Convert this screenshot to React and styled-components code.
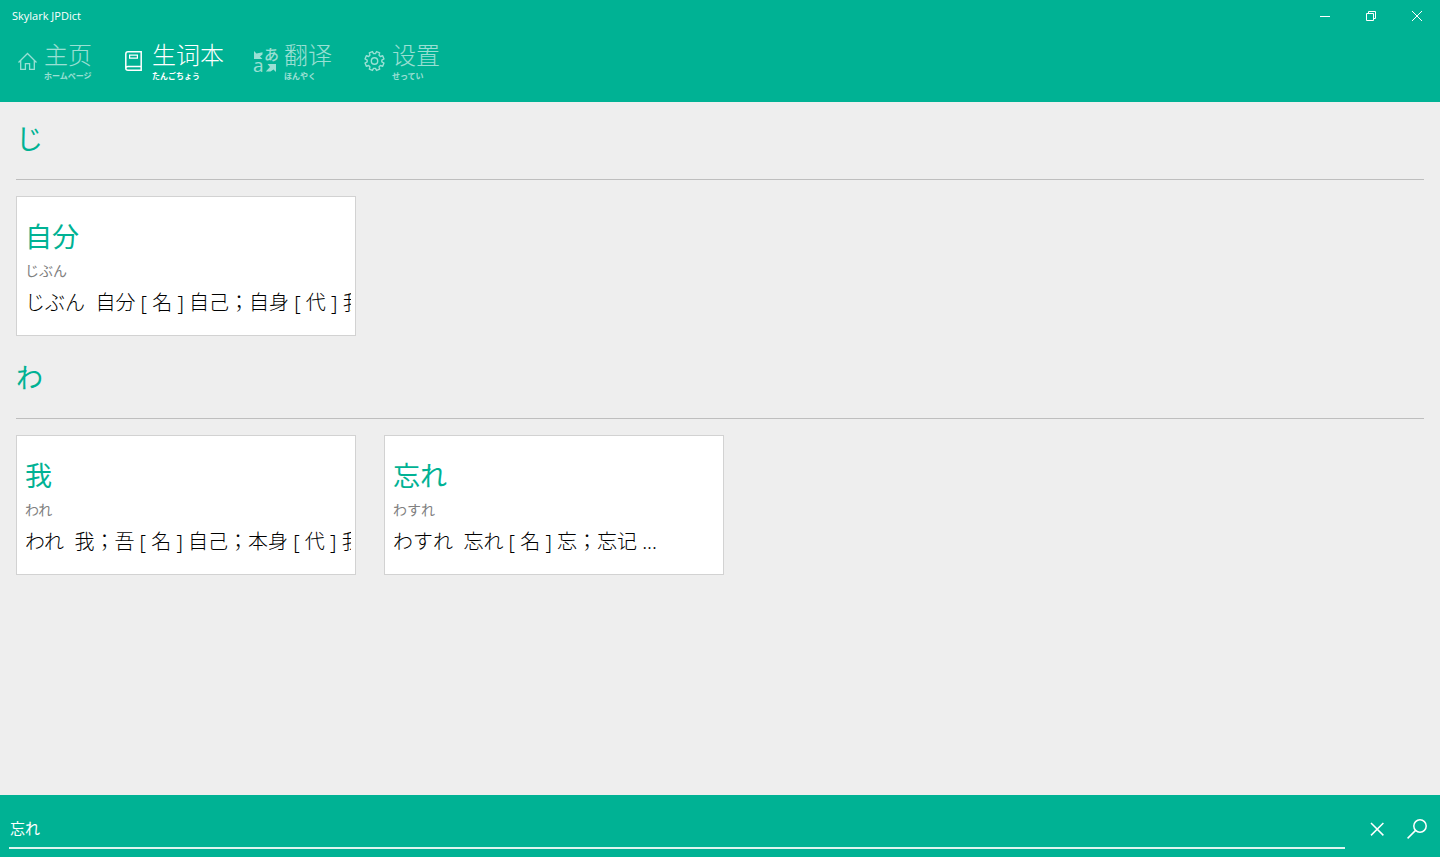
import React, { useState } from "react";
import styled, { createGlobalStyle } from "styled-components";

const teal = "#00b294";
const jp = '"Noto Sans", "Noto Sans CJK JP", sans-serif';
const sc = '"Noto Sans", "Noto Sans CJK SC", sans-serif';

const GlobalStyle = createGlobalStyle`
  *, *::before, *::after { box-sizing: border-box; }
  body { margin: 0; background: #eeeeee; font-family: ${jp}; color: #000; }
  button, input { font: inherit; color: inherit; }
`;

const Page = styled.div`
  display: flex;
  flex-direction: column;
  min-height: 100vh;
`;

const Header = styled.header`
  background: ${teal};
  color: #fff;
  padding-bottom: 19px;
`;

const TitleBar = styled.div`
  display: flex;
  align-items: center;
  justify-content: space-between;
  height: 32px;
  padding-left: 12px;
`;

const AppTitle = styled.h1`
  margin: 0;
  font-family: "Open Sans", sans-serif;
  font-size: 11px;
  font-weight: 500;
  line-height: 16px;
`;

const WindowControls = styled.div`
  display: flex;
`;

const WindowButton = styled.button`
  display: flex;
  align-items: center;
  justify-content: center;
  width: 46px;
  height: 32px;
  padding: 0;
  border: 0;
  background: none;
`;

const Nav = styled.nav`
  display: flex;
  gap: 28px;
  padding: 9px 12px 0;
`;

const NavLink = styled.a`
  display: flex;
  align-items: center;
  gap: 4px;
  color: #fff;
  opacity: ${(p) => (p.$active ? 1 : 0.6)};
  text-decoration: none;
`;

const NavText = styled.span`
  display: flex;
  flex-direction: column;
`;

const NavTitle = styled.span`
  font-family: ${sc};
  font-size: 24px;
  font-weight: 300;
  line-height: 28px;
`;

const NavReading = styled.span`
  font-size: 8px;
  font-weight: 700;
  line-height: 14px;
`;

const Main = styled.main`
  display: flex;
  flex: 1;
  flex-direction: column;
  gap: 22px;
  padding: 17px 16px;
`;

const GroupTitle = styled.h2`
  margin: 0 0 16px;
  padding-bottom: 20px;
  border-bottom: 1px solid #bebebe;
  color: ${teal};
  font-size: 27px;
  font-weight: 400;
  line-height: 40px;
`;

const CardList = styled.div`
  display: flex;
  flex-wrap: wrap;
  gap: 28px;
`;

const Card = styled.article`
  width: 340px;
  height: 140px;
  padding: 20px 4px 0 8px;
  border: 1px solid #d2d2d2;
  background: #fff;
`;

const Word = styled.h3`
  margin: 0;
  color: ${teal};
  font-size: 27px;
  font-weight: 400;
  line-height: 40px;
`;

const Reading = styled.p`
  margin: 4px 0 8px;
  color: #808080;
  font-size: 14px;
  font-weight: 400;
  line-height: 20px;
`;

const Definition = styled.p`
  margin: 0;
  overflow: hidden;
  font-size: 20px;
  font-weight: 300;
  line-height: 28px;
  white-space: pre;
`;

const SearchBar = styled.form`
  display: flex;
  align-items: center;
  height: 62px;
  padding: 0 3px 0 9px;
  background: ${teal};
  color: #fff;
`;

const SearchInput = styled.input`
  flex: 1;
  min-width: 0;
  height: 40px;
  margin: 6px 12px 0 0;
  padding: 0 1px 2px;
  border: 0;
  border-bottom: 2px solid #ddf5f0;
  border-radius: 0;
  outline: 0;
  background: none;
  font-size: 15px;
`;

const IconButton = styled.button`
  display: flex;
  align-items: center;
  justify-content: center;
  width: 40px;
  height: 40px;
  margin-top: 6px;
  padding: 0;
  border: 0;
  background: none;
`;

const Icon = styled.svg`
  display: block;
  flex: none;
  overflow: visible;
  fill: none;
  stroke: currentColor;
`;

const IconGlyph = styled.text`
  fill: currentColor;
  stroke: none;
  font-family: ${(p) => (p.$latin ? '"Open Sans", sans-serif' : jp)};
  font-size: ${(p) => (p.$latin ? 19 : 15)}px;
  font-weight: 500;
`;

const HomeIcon = () => (
  <Icon width="28" height="28" viewBox="0 1 28 28" strokeWidth="1.3">
    <path d="M6.5 15.5 L15.5 6.5 L24.5 15.5 M8.7 13.5 V22.4 H13.4 V16.6 H17.6 V22.4 H22.3 V13.5" />
  </Icon>
);

const BookIcon = () => (
  <Icon width="28" height="28" viewBox="0 1 28 28" strokeWidth="1.5">
    <path d="M21.2 4.8 H8 Q5.8 4.8 5.8 7 V21.2 Q5.8 23.2 8 23.2 H21.2 Z M5.8 21.6 Q5.8 19.6 8 19.6 H21.2" />
    <path d="M9.6 8.2 H17.4 V11.2 H9.6 Z" strokeWidth="1.2" />
  </Icon>
);

const TranslateIcon = () => (
  <Icon width="28" height="28" viewBox="0 1 28 28">
    <IconGlyph x="12" y="13">あ</IconGlyph>
    <IconGlyph $latin x="1" y="25">a</IconGlyph>
    <path fill="currentColor" stroke="none" d="M2 4 L4.5 6.5 L10.5 5.2 V7.4 L8 9.6 L10.5 12 H2 Z" />
    <path fill="currentColor" stroke="none" d="M15.5 17 H24 V25 L21.5 22.5 L18.5 24.5 H13.8 L18 20 Z" />
  </Icon>
);

const GearIcon = () => {
  const points = [];
  for (let i = 0; i < 8; i += 1) {
    [[-15, 7.4], [-10, 9.7], [10, 9.7], [15, 7.4]].forEach(([offset, r]) => {
      const a = ((i * 45 + 22.5 + offset) * Math.PI) / 180;
      points.push(`${(14.5 + r * Math.cos(a)).toFixed(2)},${(14 + r * Math.sin(a)).toFixed(2)}`);
    });
  }
  return (
    <Icon width="28" height="28" viewBox="0 1 28 28" strokeWidth="1.4">
      <polygon points={points.join(" ")} strokeLinejoin="round" />
      <circle cx="14.5" cy="14" r="3.2" />
    </Icon>
  );
};

const navItems = [
  { id: "home", title: "主页", reading: "ホームページ", icon: HomeIcon },
  { id: "wordbook", title: "生词本", reading: "たんごちょう", icon: BookIcon, active: true },
  { id: "translate", title: "翻译", reading: "ほんやく", icon: TranslateIcon },
  { id: "settings", title: "设置", reading: "せってい", icon: GearIcon },
];

const groups = [
  {
    initial: "じ",
    words: [{ word: "自分", reading: "じぶん", definition: "じぶん  自分 [ 名 ] 自己；自身 [ 代 ] 我" }],
  },
  {
    initial: "わ",
    words: [
      { word: "我", reading: "われ", definition: "われ  我；吾 [ 名 ] 自己；本身 [ 代 ] 我" },
      { word: "忘れ", reading: "わすれ", definition: "わすれ  忘れ [ 名 ] 忘；忘记 ..." },
    ],
  },
];

export default function App() {
  const [query, setQuery] = useState("忘れ");
  return (
    <Page lang="ja">
      <GlobalStyle />
      <Header>
        <TitleBar>
          <AppTitle>Skylark JPDict</AppTitle>
          <WindowControls>
            <WindowButton aria-label="Minimize">
              <Icon width="10" height="10" viewBox="0 0 10 10"><path d="M0 5.5 H10" /></Icon>
            </WindowButton>
            <WindowButton aria-label="Restore">
              <Icon width="10" height="10" viewBox="0 0 10 10"><path d="M0.5 2.5 H7.5 V9.5 H0.5 Z M2.5 2.5 V0.5 H9.5 V7.5 H7.5" /></Icon>
            </WindowButton>
            <WindowButton aria-label="Close">
              <Icon width="10" height="10" viewBox="0 0 10 10"><path d="M0 0 L10 10 M10 0 L0 10" /></Icon>
            </WindowButton>
          </WindowControls>
        </TitleBar>
        <Nav>
          {navItems.map(({ id, title, reading, icon: ItemIcon, active }) => (
            <NavLink key={id} href={`#${id}`} $active={active} aria-current={active ? "page" : undefined}>
              <ItemIcon />
              <NavText>
                <NavTitle lang="zh-CN">{title}</NavTitle>
                <NavReading>{reading}</NavReading>
              </NavText>
            </NavLink>
          ))}
        </Nav>
      </Header>
      <Main>
        {groups.map((group) => (
          <section key={group.initial}>
            <GroupTitle>{group.initial}</GroupTitle>
            <CardList>
              {group.words.map((entry) => (
                <Card key={entry.word}>
                  <Word>{entry.word}</Word>
                  <Reading>{entry.reading}</Reading>
                  <Definition>{entry.definition}</Definition>
                </Card>
              ))}
            </CardList>
          </section>
        ))}
      </Main>
      <SearchBar role="search" onSubmit={(e) => e.preventDefault()}>
        <SearchInput aria-label="Search" value={query} onChange={(e) => setQuery(e.target.value)} />
        <IconButton type="button" aria-label="Clear" onClick={() => setQuery("")}>
          <Icon width="14" height="14" viewBox="0 0 14 14" strokeWidth="1.5"><path d="M1 1 L13.4 13.4 M13.4 1 L1 13.4" /></Icon>
        </IconButton>
        <IconButton type="submit" aria-label="Find">
          <Icon width="20" height="20" viewBox="0 0 20 20" strokeWidth="1.5"><circle cx="13" cy="7" r="6.2" /><path d="M8.6 11.4 L0.6 19.4" /></Icon>
        </IconButton>
      </SearchBar>
    </Page>
  );
}
